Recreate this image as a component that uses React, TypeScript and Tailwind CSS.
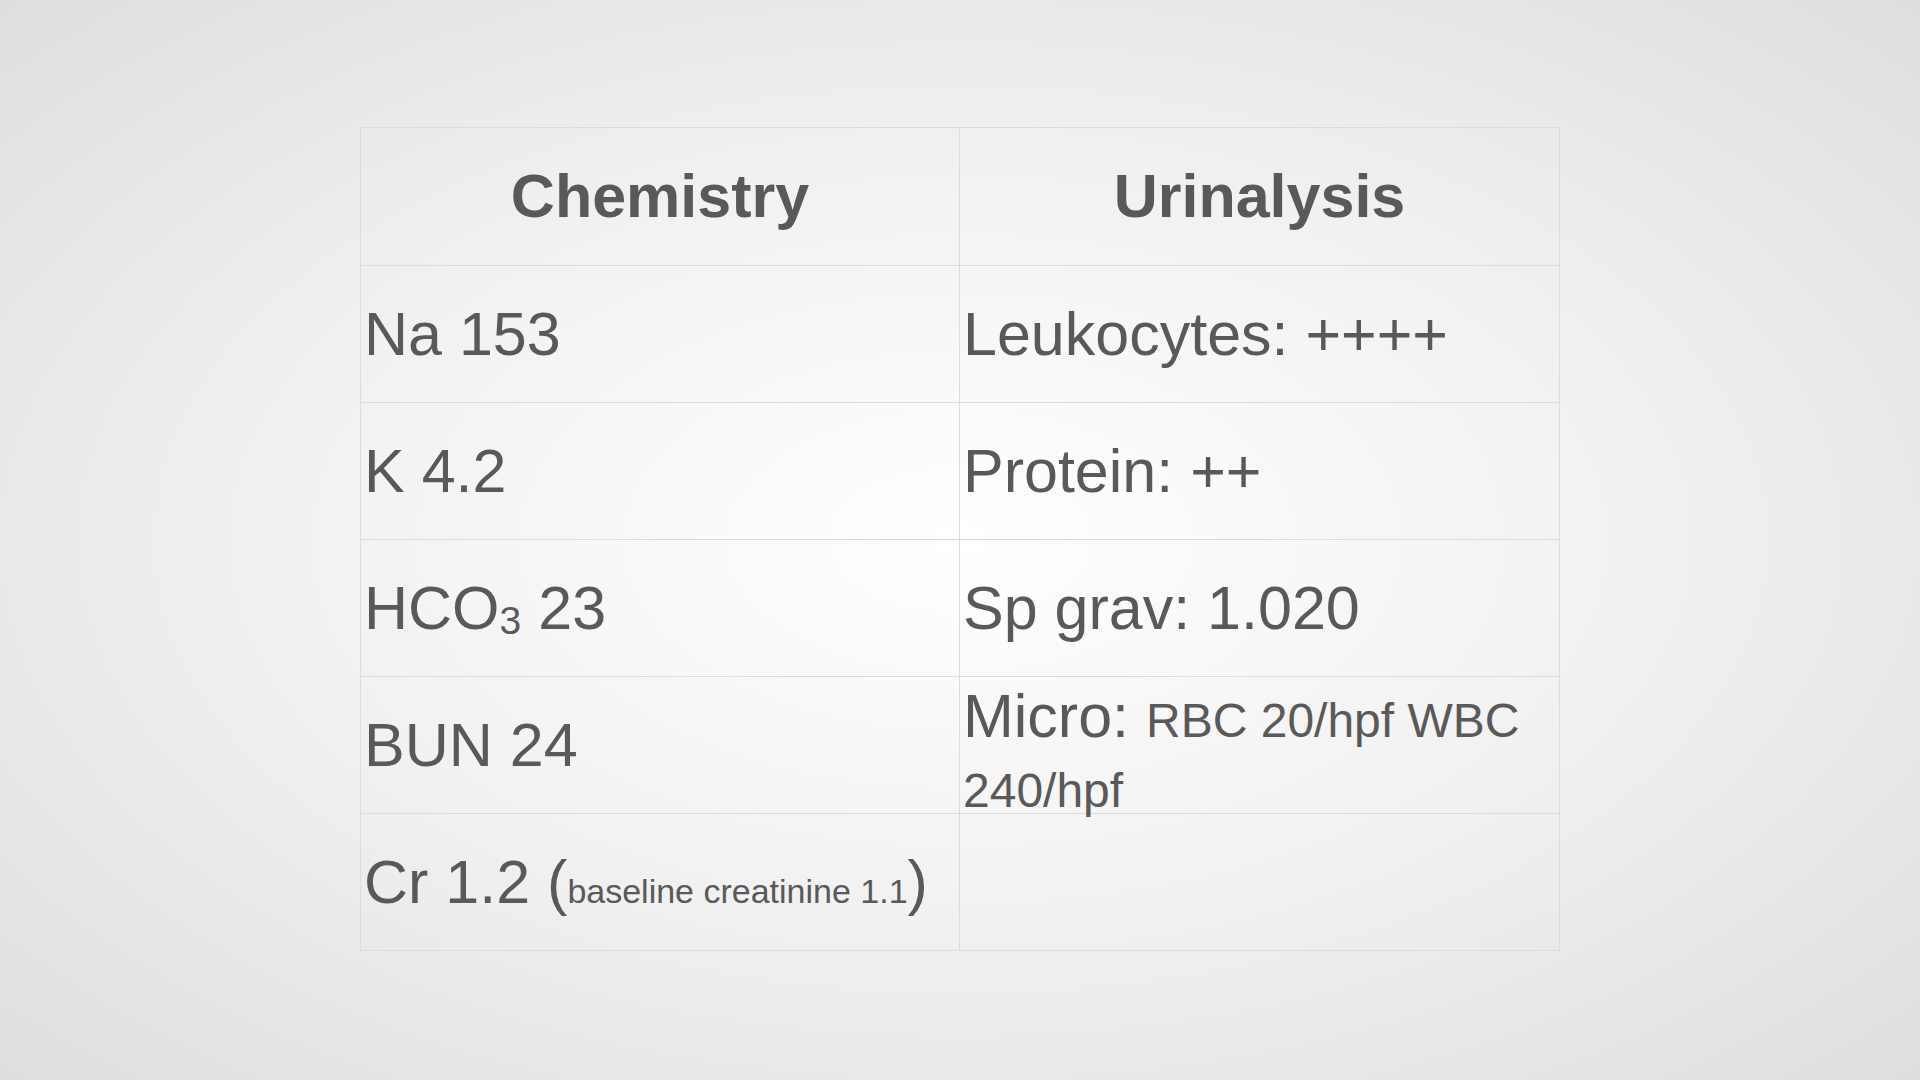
import React from "react";

interface Row {
    chem: React.ReactNode;
    urine: React.ReactNode;
    top?: boolean;
}

const rows: Row[] = [
    { chem: "Na 153", urine: "Leukocytes: ++++" },
    { chem: "K 4.2", urine: "Protein: ++" },
    {
        chem: (
            <>
                HCO<span className="relative top-[5px] text-[39px]">3</span> 23
            </>
        ),
        urine: "Sp grav: 1.020",
    },
    {
        chem: "BUN 24",
        urine: (
            <>
                Micro: <span className="text-[48px]">RBC 20/hpf WBC 240/hpf</span>
            </>
        ),
        top: true,
    },
    {
        chem: (
            <>
                Cr 1.2 (<span className="text-[34px]">baseline creatinine 1.1</span>)
            </>
        ),
        urine: "",
    },
];

const App: React.FC = () => {
    return (
        <div className="w-[1920px] h-[1080px] overflow-hidden bg-[radial-gradient(ellipse_at_center,#ffffff_0%,#f1f1f1_50%,#dedede_100%)] font-['Liberation_Sans',Arial,sans-serif] text-[#595959]">
            <div className="pt-[127px] pl-[360px]">
                <div className="grid grid-cols-[599px_600px] w-[1199px] border-t border-l border-[#dcdcdc]">
                    {/* header */}
                    <div className="h-[138px] flex items-center justify-center border-r border-b border-[#dcdcdc] text-[61px] font-bold leading-[1.15]">
                        Chemistry
                    </div>
                    <div className="h-[138px] flex items-center justify-center border-r border-b border-[#dcdcdc] text-[61px] font-bold leading-[1.15]">
                        Urinalysis
                    </div>

                    {rows.map((r, i) => (
                        <React.Fragment key={i}>
                            <div className="h-[137px] flex items-center pl-[3px] border-r border-b border-[#dcdcdc] text-[61px] leading-[1.15] whitespace-nowrap">
                                <div>{r.chem}</div>
                            </div>
                            <div
                                className={
                                    r.top
                                        ? "h-[137px] flex items-start pt-[4px] pl-[3px] pr-[10px] border-r border-b border-[#dcdcdc] text-[61px] leading-[1.15]"
                                        : "h-[137px] flex items-center pl-[3px] border-r border-b border-[#dcdcdc] text-[61px] leading-[1.15] whitespace-nowrap"
                                }
                            >
                                <div>{r.urine}</div>
                            </div>
                        </React.Fragment>
                    ))}
                </div>
            </div>
        </div>
    );
};

export default App;
